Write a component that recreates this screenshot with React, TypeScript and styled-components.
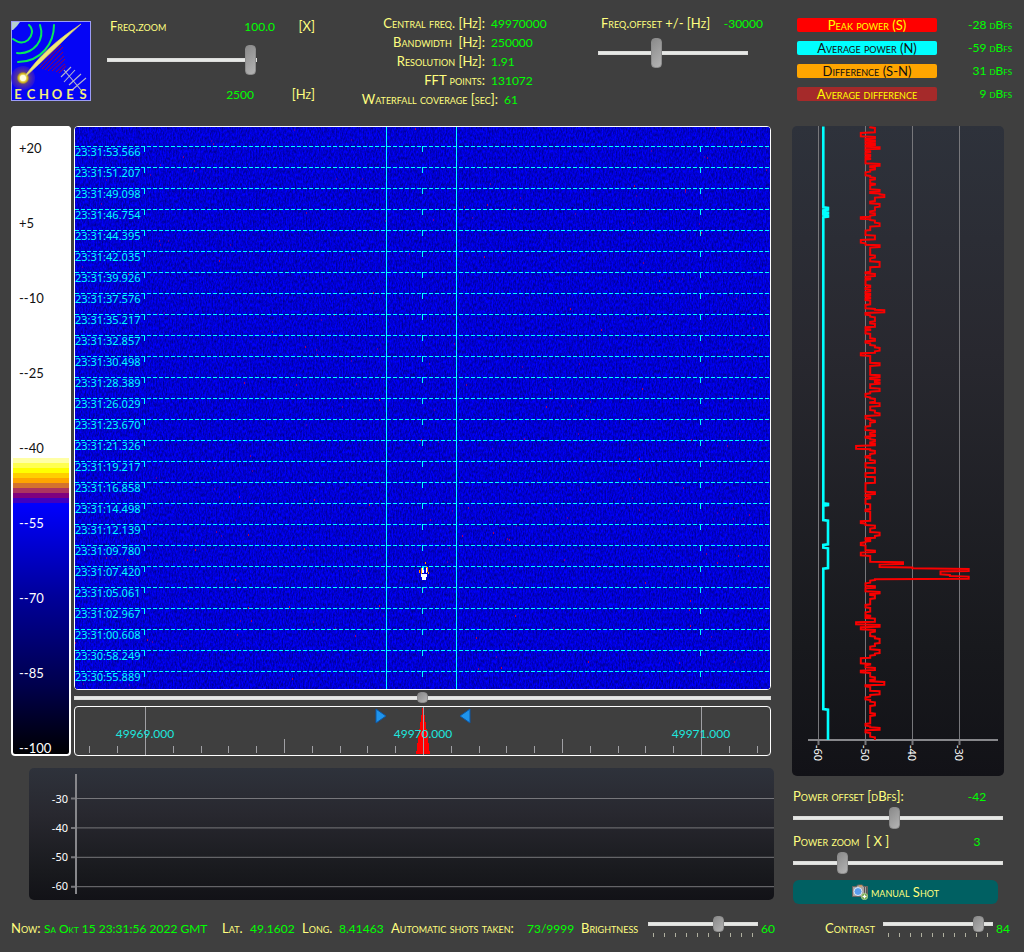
import React from "react";
import styled, { createGlobalStyle, css } from "styled-components";

const GlobalStyle = createGlobalStyle`
  * { box-sizing: border-box; }
  body {
    margin: 0;
    background: #3f3f3f;
    font-family: Lato, "Liberation Sans", sans-serif;
    font-size: 13px;
    line-height: 19px;
  }
`;

const yellow = "#ffff7f";
const green = "#00ff00";
const cyan = "#00ffff";

const Page = styled.main`
  min-height: 100vh;
  font-variant: small-caps;
  color: ${yellow};
`;

const Header = styled.header`
  display: grid;
  grid-template-columns: 80px 208px 1fr 183px 215px;
  column-gap: 16px;
  align-items: start;
  height: 126px;
  padding: 14px 12px 0 11px;
`;

const Logo = styled.svg`
  display: block;
  width: 80px;
  height: 80px;
  margin-top: 7px;
`;

const Value = styled.output`
  color: ${green};
  white-space: pre;
  font-size: 12px;
`;

const Label = styled.label`
  white-space: pre;
`;

const Text = styled.span`
  white-space: pre;
`;

const thumb = css`
  width: 11px;
  height: var(--thumb);
  border: 1px solid #8c8c8c;
  border-radius: 4px;
  background: linear-gradient(135deg, #8a8a8a, #b4b4b4);
`;

const Slider = styled.input.attrs({ type: "range", min: 0, max: 100 })<{ $thumb: number }>`
  --thumb: ${(p) => p.$thumb}px;
  appearance: none;
  display: block;
  width: 100%;
  height: ${(p) => p.$thumb}px;
  margin: 0;
  background: transparent;
  &::-webkit-slider-runnable-track {
    height: 4px;
    background: #e6e8e6;
    border: 1px solid #dcdcda;
  }
  &::-webkit-slider-thumb {
    appearance: none;
    ${thumb}
    margin-top: calc((2px - var(--thumb)) / 2);
  }
  &::-moz-range-track {
    height: 4px;
    background: #e6e8e6;
  }
  &::-moz-range-thumb {
    ${thumb}
  }
`;

const ZoomGroup = styled.section`
  padding: 3px 0 0 3px;
`;

const ZoomRow = styled.div`
  display: grid;
  grid-template-columns: 1fr 60px 40px;
  text-align: right;
  label { text-align: left; }
`;

const ZoomSlider = styled.div`
  width: 150px;
  margin: 9px 0 10px -3px;
`;

const RangeValue = styled(Value)`
  padding-right: 21px;
`;

const Info = styled.dl`
  margin: 0;
`;

const InfoRow = styled.div<{ $wide?: boolean }>`
  display: grid;
  grid-template-columns: ${(p) => (p.$wide ? 167 : 154)}px 1fr;
  column-gap: 6px;
`;

const Term = styled.dt`
  text-align: right;
  white-space: pre;
`;

const Detail = styled.dd`
  margin: 0;
  color: ${green};
  font-size: 12px;
`;

const OffsetGroup = styled.section`
  width: 165px;
`;

const OffsetRow = styled.div`
  display: flex;
  justify-content: space-between;
  padding-left: 3px;
`;

const OffsetSlider = styled.div`
  width: 150px;
  margin-top: 5px;
`;

const Legend = styled.section`
  display: grid;
  grid-template-columns: 140px 1fr;
  row-gap: 9px;
  padding-top: 4px;
  line-height: 14px;
`;

const Badge = styled.span<{ $bg: string; $fg: string }>`
  height: 14px;
  border-radius: 2px;
  background: ${(p) => p.$bg};
  color: ${(p) => p.$fg};
  text-align: center;
`;

const LegendValue = styled(Value)`
  text-align: right;
`;

const Body = styled.div`
  display: grid;
  grid-template-columns: 1fr 212px;
  column-gap: 18px;
  padding: 0 20px 0 11px;
`;

const Spectrum = styled.section`
  display: grid;
  grid-template-columns: 60px 1fr;
  column-gap: 3px;
  margin-right: 3px;
`;

const Scale = styled.ol`
  height: 630px;
  margin: 0;
  padding: 13px 0 0 8px;
  overflow: hidden;
  list-style: none;
  border-radius: 4px;
  box-shadow: inset 0 0 0 2px #fff;
  background: linear-gradient(
    #fff 332px, #ffffa6 332px 337px, #ffff50 337px 342px, #ffff00 342px 347px,
    #ffcf00 347px 352px, #ffa500 352px 357px, #d4722e 357px 362px, #ab3460 362px 367px,
    #80007f 367px 372px, #4000c0 372px 377px, #0000ff 377px, #00009a 470px, #00004c 560px, #000 630px
  );
`;

const ScaleMark = styled.li<{ $light: boolean }>`
  height: 75px;
  color: ${(p) => (p.$light ? "#fff" : "#111")};
  font-size: 13px;
`;

const Screens = styled.div`
  display: flex;
  flex-direction: column;
`;

const Framed = styled.svg`
  display: block;
  width: 100%;
  border: 1px solid #fff;
  border-radius: 4px;
`;

const Waterfall = styled(Framed)`
  height: 564px;
  font: 11px "Noto Sans", sans-serif;
`;

const Ruler = styled(Framed)`
  height: 50px;
  overflow: hidden;
  font-size: 12px;
`;

const PanSlider = styled.div`
  padding: 2px 0 3px;
`;

const chartPanel = css`
  display: block;
  border-radius: 5px;
  background: linear-gradient(#2e323b, #28282f 35%, #18191d 80%, #121217);
  font: 11px "Noto Sans", sans-serif;
`;

const History = styled.svg`
  ${chartPanel}
  width: calc(100% - 18px);
  height: 132px;
  margin: 12px 0 0 18px;
`;

const PowerChart = styled.svg`
  ${chartPanel}
  width: 212px;
  height: 650px;
`;

const PowerRow = styled.div`
  display: grid;
  grid-template-columns: 1fr 40px;
  padding: 0 7px 0 1px;
  output { text-align: center; }
`;

const PowerControls = styled.section`
  padding-top: 11px;
`;

const PowerSlider = styled.div`
  padding: 1px 1px 3px;
`;

const ShotButton = styled.button`
  display: flex;
  align-items: center;
  justify-content: center;
  gap: 3px;
  width: 205px;
  height: 24px;
  margin: 3px 0 0 1px;
  padding: 0;
  border: 0;
  border-radius: 6px;
  background: #006062;
  color: ${yellow};
  font: inherit;
  font-variant: small-caps;
`;

const Footer = styled.footer`
  display: grid;
  grid-template-columns: 33px 178px 28px 52px 37px 52px 136px 54px 67px 110px 1fr 58px 110px 22px;
  align-items: center;
  height: 30px;
  margin-top: 9px;
  padding: 0 9px 0 11px;
`;

const FooterValue = styled(Value)`
  padding-left: 3px;
`;

const TickSlider = styled.div`
  height: 24px;
`;

const Ticks = styled.svg`
  display: block;
  width: 110px;
  height: 6px;
`;

function EchoesLogo() {
  return (
    <Logo viewBox="0 0 80 80" role="img" aria-label="Echoes">
      <defs>
        <radialGradient id="spark">
          <stop offset="0" stopColor="#fff" />
          <stop offset="0.22" stopColor="#fff68a" />
          <stop offset="0.4" stopColor="#c9a91c" />
          <stop offset="0.52" stopColor="#5a3a90" />
          <stop offset="1" stopColor="#3a18d0" stopOpacity="0.6" />
        </radialGradient>
      </defs>
      <rect x="0.5" y="0.5" width="79" height="79" fill="#0505f5" stroke="#9c9cf6" />
      <path d="M1 1h8L6 5 2 9H1z" fill="#b4d0d0" />
      <g fill="none" stroke="#08e85c" strokeWidth="2" strokeLinecap="round">
        <path d="M18 4C23 9 21 15 17 19 12 23 6 21 2 18" />
        <path d="M29 4c3 9 1 15-3 20-6 7-12 9-20 8" />
        <path d="M43 4c0 10-3 18-9 25-7 8-15 12-27 12" />
      </g>
      <path
        d="M29 46L50 24M31 48L52 26M34 49L52 31M37 50L53 35M41 50L54 38M45 51L54 43M48 52L55 45M28 43L50 22"
        stroke="#9c0048"
        strokeWidth="1"
        fill="none"
      />
      <circle cx="12" cy="57" r="12" fill="url(#spark)" />
      <path d="M12 58C25 39 40 23 70 3 46 25 34 38 14 56z" fill="#eee878" stroke="#d8ce70" strokeWidth="0.7" />
      <circle cx="12" cy="57" r="3" fill="#fffde0" />
      <path
        d="M53 49l17 20M50 56l10-10M53 61l11-12M58 64l12-11M61 69l14-12"
        stroke="#b6b6ca"
        strokeWidth="1.1"
        fill="none"
      />
      <g fill="#f2ec7c" fontSize="13" fontWeight="700" textAnchor="middle">
        {["E", "C", "H", "O", "E", "S"].map((c, i) => (
          <text key={i} x={7 + i * 13} y="78">{c}</text>
        ))}
      </g>
    </Logo>
  );
}

const times = [
  "23:31:53.566", "23:31:51.207", "23:31:49.098", "23:31:46.754", "23:31:44.395", "23:31:42.035",
  "23:31:39.926", "23:31:37.576", "23:31:35.217", "23:31:32.857", "23:31:30.498", "23:31:28.389",
  "23:31:26.029", "23:31:23.670", "23:31:21.326", "23:31:19.217", "23:31:16.858", "23:31:14.498",
  "23:31:12.139", "23:31:09.780", "23:31:07.420", "23:31:05.061", "23:31:02.967", "23:31:00.608",
  "23:30:58.249", "23:30:55.889",
];

function sparks(count: number) {
  let seed = 7;
  const next = () => (seed = (seed * 16807) % 2147483647) / 2147483647;
  return Array.from({ length: count }, () => ({
    x: next() * 100,
    y: Math.floor(next() * 560),
    color: ["#5a00a4", "#800080", "#5000a8", "#b40050"][Math.floor(next() * 4)],
  }));
}

function WaterfallView() {
  return (
    <Waterfall>
      <filter id="noise" x="0" y="0" width="100%" height="100%" colorInterpolationFilters="sRGB">
        <feTurbulence type="fractalNoise" baseFrequency="0.7 0.3" numOctaves="2" seed="4" />
        <feColorMatrix values="0 0 0 0 0  0 0 0 0 0  0.8 0 0 0 0.42  0 0 0 0 1" />
      </filter>
      <rect width="100%" height="100%" fill="#0000d8" />
      <rect width="100%" height="100%" filter="url(#noise)" />
      <g shapeRendering="crispEdges">
        {sparks(190).map((s, i) => (
          <rect key={i} x={`${s.x}%`} y={s.y} width="1" height="2" fill={s.color} />
        ))}
      </g>
      <g stroke={cyan} shapeRendering="crispEdges">
        {times.map((t, i) => (
          <g key={t}>
            <line x1="0" x2="100%" y1={19.5 + i * 21} y2={19.5 + i * 21} strokeDasharray="4 2" />
            {["10.07%", "50.07%", "90.07%"].map((x) => (
              <line key={x} x1={x} x2={x} y1={19 + i * 21} y2={25 + i * 21} />
            ))}
          </g>
        ))}
        <line x1="44.8%" x2="44.8%" y1="0" y2="100%" />
        <line x1="54.9%" x2="54.9%" y1="0" y2="100%" />
      </g>
      <g fill={cyan}>
        {times.map((t, i) => (
          <text key={t} x="0" y={29 + i * 21}>{t}</text>
        ))}
      </g>
      <svg x="50%" y="439" overflow="visible">
        <g shapeRendering="crispEdges">
          <path d="M-4 4h1v3h-1zM-2 2h1v7h-1zM3 1h2v5H3zM5 6h1v2H5zM2 -4h1v2H2z" fill="#ff9000" />
          <path d="M-1 2h2v5h-2zM3 2h1v5H3zM-2 8h6v3H3v3h-4v-3h-1z" fill="#fff" />
          <path d="M0 1h1v3H0z" fill={cyan} />
        </g>
      </svg>
    </Waterfall>
  );
}

function RulerView() {
  return (
    <Ruler>
      <svg x="50.07%" overflow="visible">
        <path d="M-1 1h2v7h1v7h1v7h1v7h1v7h1v8h1v3H-7v-3h1v-8h1v-7h1v-7h1v-7h1V8h1z" fill="#f00" />
        <g fill="#1f94ec" stroke="#0b58a8">
          <path d="M-47 2v14l10-7z" />
          <path d="M47 2v14l-10-7z" />
        </g>
      </svg>
      <g stroke="#a0a0a4" shapeRendering="crispEdges">
        {Array.from({ length: 25 }, (_, i) => i - 2).map((k) => (
          <line
            key={k}
            x1={`${10.14 + 4 * k}%`}
            x2={`${10.14 + 4 * k}%`}
            y1={k % 10 === 0 ? 0 : k % 5 === 0 ? 32 : 39}
            y2={k % 10 === 0 ? 48 : 46}
          />
        ))}
      </g>
      <g fill="#1ee6de" textAnchor="middle">
        <text x="10.07%" y="31">49969.000</text>
        <text x="50.07%" y="31">49970.000</text>
        <text x="90.07%" y="31">49971.000</text>
      </g>
    </Ruler>
  );
}

function HistoryView() {
  return (
    <History>
      <g stroke="#77777b">
        {[-30, -40, -50, -60].map((v, i) => (
          <g key={v}>
            <line x1="48" x2="100%" y1={30.5 + i * 29.4} y2={30.5 + i * 29.4} />
            <line x1="42" x2="47" y1={30.5 + i * 29.4} y2={30.5 + i * 29.4} strokeWidth="2" />
          </g>
        ))}
        <line x1="47" x2="47" y1="6" y2="126" stroke="#87878b" strokeWidth="2" />
      </g>
      <g fill="#fff" textAnchor="end">
        {[-30, -40, -50, -60].map((v, i) => (
          <text key={v} x="39" y={35 + i * 29}>{v}</text>
        ))}
      </g>
    </History>
  );
}

// Each pair is: the end of the step along the time axis (thirds of a pixel), level in -dBFS.
const peak: [number, number][] = [
  [22, 49], [37, 48], [49, 51], [55, 48], [60, 50], [65, 48], [70, 50], [75, 48], [80, 50], [86, 47], [92, 50],
  [97, 49], [103, 50], [108, 49], [113, 50], [117, 49], [130, 50], [137, 47], [142, 49], [148, 48], [155, 49],
  [166, 50], [172, 49], [178, 48], [190, 49], [194, 48], [208, 49], [214, 47], [219, 49], [223, 47], [231, 46],
  [243, 48], [250, 49], [260, 47], [272, 48], [278, 49], [285, 48], [290, 49], [296, 51], [300, 49], [308, 48],
  [318, 47], [330, 49], [345, 50], [358, 48], [368, 51], [374, 50], [381, 47], [405, 49], [413, 48], [424, 49],
  [440, 47], [455, 49], [460, 50], [468, 48], [473, 50], [478, 49], [495, 50], [502, 49], [508, 50], [514, 49],
  [520, 50], [525, 49], [530, 50], [535, 49], [540, 50], [553, 49], [565, 50], [569, 48], [577, 46], [584, 50],
  [590, 49], [604, 48], [610, 49], [620, 48], [626, 50], [630, 49], [640, 50], [655, 49], [662, 48], [668, 50],
  [675, 49], [682, 48], [692, 47], [698, 48], [706, 51], [728, 49], [736, 47], [764, 49], [771, 47], [777, 49],
  [781, 47], [786, 48], [791, 47], [804, 49], [813, 47], [820, 49], [830, 50], [835, 49], [845, 48], [848, 49],
  [858, 47], [870, 49], [878, 48], [886, 47], [895, 50], [900, 49], [906, 48], [918, 49], [930, 50], [937, 48],
  [943, 49], [948, 48], [953, 50], [958, 49], [965, 48], [970, 49], [976, 48], [986, 52], [991, 49], [1000, 48],
  [1007, 49], [1012, 50], [1020, 49], [1028, 48], [1042, 50], [1058, 48], [1070, 50], [1088, 48], [1115, 50],
  [1122, 48], [1128, 50], [1135, 49], [1151, 50], [1167, 49], [1173, 50], [1202, 49], [1209, 51], [1215, 50],
  [1224, 48], [1236, 49], [1246, 47], [1253, 48], [1258, 50], [1263, 49], [1267, 50], [1275, 51], [1290, 50],
  [1296, 48], [1306, 51], [1325, 49], [1332, 42], [1341, 47], [1345, 40], [1353, 28], [1363, 34], [1368, 32],
  [1376, 28], [1380, 48], [1388, 49], [1397, 50], [1403, 48], [1414, 50], [1420, 47], [1425, 49], [1435, 48],
  [1453, 49], [1462, 50], [1475, 49], [1485, 50], [1489, 49], [1494, 50], [1505, 48], [1513, 52], [1520, 47],
  [1528, 51], [1535, 48], [1548, 49], [1555, 48], [1569, 47], [1578, 48], [1588, 49], [1599, 47], [1605, 48],
  [1613, 49], [1630, 51], [1634, 49], [1642, 50], [1650, 48], [1657, 51], [1670, 49], [1678, 48], [1684, 49],
  [1694, 46], [1699, 50], [1712, 49], [1723, 47], [1730, 49], [1738, 50], [1745, 49], [1756, 48], [1779, 49],
  [1786, 48], [1810, 49], [1817, 50], [1822, 49], [1829, 47], [1837, 50], [1850, 49], [1860, 48],
];

const average: [number, number][] = [
  [262, 59], [269, 58], [276, 59], [281, 58], [284, 59], [290, 58], [1150, 59], [1155, 58], [1200, 59], [1273, 58],
  [1283, 59], [1344, 58], [1767, 59], [1860, 58],
];

function trace(series: [number, number][]) {
  let y = 0;
  return series
    .map(([end, level]) => {
      const x = (73.5 + (50 - level) * 4.69).toFixed(1);
      const start = y + 0.6;
      y = (end - 18) / 3;
      return `${x},${start.toFixed(1)} ${x},${y.toFixed(1)}`;
    })
    .join(" ");
}

function PowerView() {
  return (
    <PowerChart viewBox="0 0 212 650">
      <g stroke="#77777b">
        {[60, 50, 40, 30].map((v, i) => (
          <g key={v}>
            <line x1={26.5 + i * 47} x2={26.5 + i * 47} y1="0" y2="614" />
            <line x1={26.5 + i * 47} x2={26.5 + i * 47} y1="614" y2="619" strokeWidth="2" />
          </g>
        ))}
      </g>
      <g fill="none" strokeWidth="2">
        <line x1="16" x2="206" y1="614" y2="614" stroke="#87878b" />
        <polyline points={trace(average)} stroke={cyan} strokeWidth="2.6" />
        <polyline points={trace(peak)} stroke="#fa0000" />
      </g>
      <g fill="#fff">
        {[60, 50, 40, 30].map((v, i) => (
          <text key={v} transform={`translate(${22 + i * 47} 619) rotate(90)`}>-{v}</text>
        ))}
      </g>
    </PowerChart>
  );
}

function CameraIcon() {
  return (
    <svg width="16" height="16" viewBox="0 0 16 16" aria-hidden="true">
      <path d="M0.500 2.500h4l1-1.500h5l1 1.500h4v10h-15z" fill="#a9a6a4" stroke="#6c6460" />
      <path d="M7 1.500h3v1H7z" fill="#f0a03c" />
      <path d="M12.500 3v9M14.500 3v9" stroke="#5a5654" />
      <circle cx="6" cy="7.500" r="4" fill="#5b9ded" stroke="#dce8f4" />
      <circle cx="12.500" cy="12.500" r="3.200" fill="#5f9c35" stroke="#d7e8c0" strokeWidth="0.6" />
      <path d="M12.500 10.500v4M10.500 12.500h4" stroke="#fff" strokeWidth="1.300" />
    </svg>
  );
}

function LevelSlider({ id, value }: { id: string; value: number }) {
  return (
    <TickSlider>
      <Slider id={id} $thumb={16} defaultValue={value} />
      <Ticks>
        {Array.from({ length: 10 }, (_, i) => (
          <line key={i} x1={5.5 + i * 11} x2={5.5 + i * 11} y1="1" y2="5" stroke="#b0b0a0" />
        ))}
      </Ticks>
    </TickSlider>
  );
}

const info = [
  ["Central freq. [Hz]:", "49970000"],
  ["Bandwidth  [Hz]:", "250000"],
  ["Resolution [Hz]:", "1.91"],
  ["FFT points:", "131072"],
  ["Waterfall coverage [sec]:", "61"],
];

const legend = [
  ["Peak power (S)", "-28 dBfs", "#ff0000", "#ffff00"],
  ["Average power (N)", "-59 dBfs", "#00ffff", "#111111"],
  ["Difference (S-N)", "31 dBfs", "#ffa500", "#111111"],
  ["Average difference", "9 dBfs", "#a52a2a", "#ffff00"],
];

const marks = ["+20", "+5", "--10", "--25", "--40", "--55", "--70", "--85", "--100"];

export default function App() {
  return (
    <Page>
      <GlobalStyle />
      <Header>
        <EchoesLogo />
        <ZoomGroup>
          <ZoomRow>
            <Label htmlFor="zoom">Freq.zoom</Label>
            <Value>100.0</Value>
            <Text>[X]</Text>
          </ZoomRow>
          <ZoomSlider>
            <Slider id="zoom" $thumb={30} defaultValue={100} />
          </ZoomSlider>
          <ZoomRow>
            <span />
            <RangeValue>2500</RangeValue>
            <Text>[Hz]</Text>
          </ZoomRow>
        </ZoomGroup>
        <Info>
          {info.map(([k, v], i) => (
            <InfoRow key={k} $wide={i === 4}>
              <Term>{k}</Term>
              <Detail>{v}</Detail>
            </InfoRow>
          ))}
        </Info>
        <OffsetGroup>
          <OffsetRow>
            <Label htmlFor="offset">Freq.offset +/- [Hz]</Label>
            <Value>-30000</Value>
          </OffsetRow>
          <OffsetSlider>
            <Slider id="offset" $thumb={30} defaultValue={38} />
          </OffsetSlider>
        </OffsetGroup>
        <Legend>
          {legend.map(([name, value, bg, fg]) => (
            <React.Fragment key={name}>
              <Badge $bg={bg} $fg={fg}>{name}</Badge>
              <LegendValue>{value}</LegendValue>
            </React.Fragment>
          ))}
        </Legend>
      </Header>
      <Body>
        <div>
          <Spectrum>
            <Scale>
              {marks.map((m, i) => (
                <ScaleMark key={m} $light={i > 4}>{m}</ScaleMark>
              ))}
            </Scale>
            <Screens>
              <WaterfallView />
              <PanSlider>
                <Slider aria-label="Pan" $thumb={11} defaultValue={50} />
              </PanSlider>
              <RulerView />
            </Screens>
          </Spectrum>
          <HistoryView />
        </div>
        <aside>
          <PowerView />
          <PowerControls>
            <PowerRow>
              <Label htmlFor="power-offset">Power offset [dBfs]:</Label>
              <Value>-42</Value>
            </PowerRow>
            <PowerSlider>
              <Slider id="power-offset" $thumb={22} defaultValue={48} />
            </PowerSlider>
            <PowerRow>
              <Label htmlFor="power-zoom">Power zoom  [ X ]</Label>
              <Value>3</Value>
            </PowerRow>
            <PowerSlider>
              <Slider id="power-zoom" $thumb={22} defaultValue={22} />
            </PowerSlider>
            <ShotButton type="button">
              <CameraIcon />
              manual Shot
            </ShotButton>
          </PowerControls>
        </aside>
      </Body>
      <Footer>
        <Text>Now:</Text>
        <Value>Sa Okt 15 23:31:56 2022 GMT</Value>
        <Text>Lat.</Text>
        <Value>49.1602</Value>
        <Text>Long.</Text>
        <Value>8.41463</Value>
        <Text>Automatic shots taken:</Text>
        <Value>73/9999</Value>
        <Label htmlFor="brightness">Brightness</Label>
        <LevelSlider id="brightness" value={66} />
        <FooterValue>60</FooterValue>
        <Label htmlFor="contrast">Contrast</Label>
        <LevelSlider id="contrast" value={92} />
        <FooterValue>84</FooterValue>
      </Footer>
    </Page>
  );
}
